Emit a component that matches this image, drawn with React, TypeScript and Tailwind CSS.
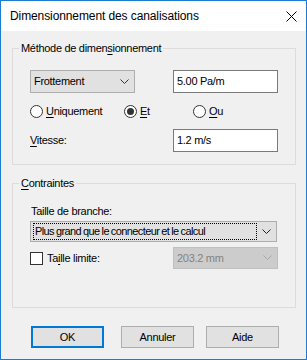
import React from "react";

const Chevron = ({ color = "#333333" }: { color?: string }) => (
  <svg width="9" height="6" viewBox="0 0 9 6" className="block">
    <polyline points="0.5,0.5 4.5,4.5 8.5,0.5" fill="none" stroke={color} strokeWidth="1" />
  </svg>
);

const U = ({ children }: { children: React.ReactNode }) => <span className="underline underline-offset-[2px]">{children}</span>;

const Radio = ({ checked }: { checked?: boolean }) => (
  <div className="w-[13px] h-[13px] rounded-full border border-[#333333] bg-white flex items-center justify-center shrink-0">
    {checked && <div className="w-[7px] h-[7px] rounded-full bg-[#333333]" />}
  </div>
);

export default function App() {
  return (
    <div className="w-[307px] h-[360px] border border-[#1a7cd3] bg-[#f0f0f0] flex flex-col font-['Liberation_Sans',Arial,sans-serif] text-[11px] tracking-[-0.3px] text-black overflow-hidden">
      <div className="h-[30px] bg-white flex items-center justify-between pl-[9px] pr-[9px] shrink-0">
        <span className="text-[12px] tracking-[-0.1px]">Dimensionnement des canalisations</span>
        <svg width="11" height="11" viewBox="0 0 11 11" className="block mt-[1px]">
          <line x1="0.5" y1="0.5" x2="10.5" y2="10.5" stroke="#000" strokeWidth="1" />
          <line x1="10.5" y1="0.5" x2="0.5" y2="10.5" stroke="#000" strokeWidth="1" />
        </svg>
      </div>

      <div className="flex flex-col px-[11px] pt-[11px]">
        <fieldset className="border border-[#dcdcdc] w-[284px]">
          <legend className="ml-[6px] px-[2px] leading-[13px]">
            Méthode de dimen<U>s</U>ionnement
          </legend>
          <div className="flex flex-col pl-[17px] pr-[17px] pt-[15px] pb-[12px]">
            <div className="flex justify-between">
              <div className="w-[105px] h-[23px] bg-[#e1e1e1] border border-[#adadad] flex items-center justify-between pl-[3px] pr-[5px]">
                <span>Frottement</span>
                <Chevron />
              </div>
              <div className="w-[105px] h-[23px] bg-white border border-[#7a7a7a] flex items-center pl-[3px]">
                <span>5.00 Pa/m</span>
              </div>
            </div>
            <div className="flex items-center h-[13px] mt-[12px]">
              <div className="w-[94px] flex items-center gap-[3px]">
                <Radio />
                <span className="leading-[13px]"><U>U</U>niquement</span>
              </div>
              <div className="w-[69px] flex items-center gap-[3px]">
                <Radio checked />
                <span className="leading-[13px]"><U>E</U>t</span>
              </div>
              <div className="flex items-center gap-[3px]">
                <Radio />
                <span className="leading-[13px]"><U>O</U>u</span>
              </div>
            </div>
            <div className="flex justify-between items-center mt-[11px]">
              <span><U>V</U>itesse:</span>
              <div className="w-[105px] h-[23px] bg-white border border-[#7a7a7a] flex items-center pl-[3px]">
                <span>1.2 m/s</span>
              </div>
            </div>
          </div>
        </fieldset>

        <fieldset className="border border-[#dcdcdc] w-[284px] mt-[12px]">
          <legend className="ml-[6px] px-[2px] leading-[13px]">
            <U>C</U>ontraintes
          </legend>
          <div className="flex flex-col pl-[17px] pr-[17px] pt-[15px] pb-[38px]">
            <div className="h-[13px] leading-[13px] pl-[1px]">Taille de branche:</div>
            <div className="mt-[3px] w-[247px] h-[21px] bg-[#e1e1e1] border border-[#adadad] flex items-center justify-between pl-[2px] pr-[5px]">
              <div className="h-[17px] w-[224px] border border-dotted border-black flex items-center pl-[1px]">
                <span className="tracking-[-0.6px] [word-spacing:-0.5px]">Plus grand que le connecteur et le calcul</span>
              </div>
              <Chevron color="#222222" />
            </div>
            <div className="mt-[5px] flex items-center justify-between">
              <div className="flex items-center gap-[4px]">
                <div className="w-[13px] h-[13px] border border-[#333333] bg-white" />
                <span>Ta<U>i</U>lle limite:</span>
              </div>
              <div className="w-[105px] h-[22px] bg-[#cccccc] border border-[#bfbfbf] flex items-center justify-between pl-[3px] pr-[5px]">
                <span className="text-[#838383]">203.2 mm</span>
                <Chevron color="#a8a8a8" />
              </div>
            </div>
          </div>
        </fieldset>

        <div className="flex mt-[18px] pl-[19px]">
          <button className="w-[73px] h-[22px] bg-[#e1e1e1] border-2 border-[#0078d7] flex items-center justify-center">OK</button>
          <button className="ml-[17px] w-[73px] h-[22px] bg-[#e1e1e1] border border-[#adadad] flex items-center justify-center">Annuler</button>
          <button className="ml-[12px] w-[73px] h-[22px] bg-[#e1e1e1] border border-[#adadad] flex items-center justify-center">Aide</button>
        </div>
      </div>
    </div>
  );
}
